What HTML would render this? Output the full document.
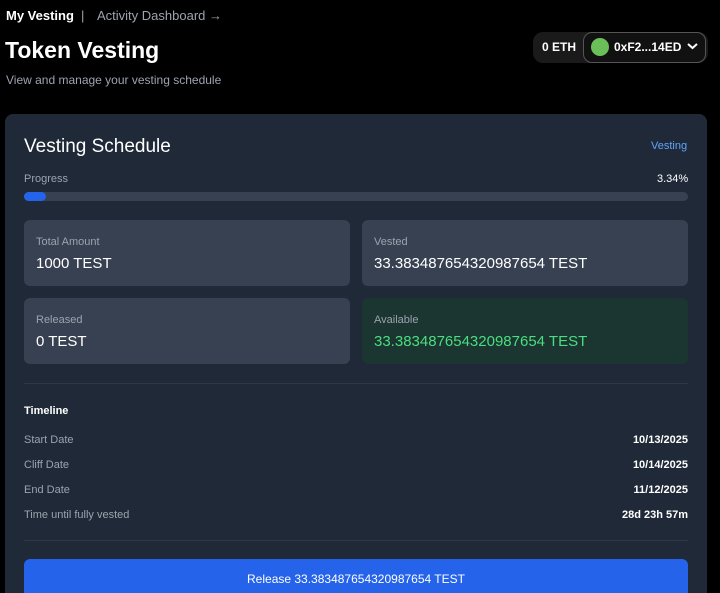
<!DOCTYPE html>
<html><head><style>
*{margin:0;padding:0;box-sizing:border-box}
html,body{width:720px;height:593px;overflow:hidden}
body{background:#000;font-family:"Liberation Sans",sans-serif;color:#fff;position:relative}
.a{position:absolute}
.card{left:5px;top:114px;width:702px;height:479px;background:#1f2937;border-radius:8px 8px 0 0}
.box{position:absolute;width:326px;height:66px;background:#374151;border-radius:6px}
.box .l{position:absolute;left:12px;top:16px;font-size:11px;color:#9ca3af}
.box .v{position:absolute;left:12px;top:35px;font-size:15px;color:#fff}
.row{position:absolute;left:24px;width:664px;font-size:11px;color:#9ca3af;display:flex;justify-content:space-between}
.row b{color:#fff;font-size:11px}
</style></head><body>
<div class="a" style="left:6px;top:8px;font-size:13px;font-weight:bold">My Vesting</div>
<div class="a" style="left:81px;top:8px;font-size:13px;color:#9ca3af">|</div>
<div class="a" style="left:97px;top:8px;font-size:13px;color:#9ca3af">Activity Dashboard →</div>
<div class="a" style="left:5px;top:37px;font-size:23px;font-weight:bold">Token Vesting</div>
<div class="a" style="left:6px;top:73px;font-size:12px;color:#9ca3af">View and manage your vesting schedule</div>
<div class="a" style="left:533px;top:32px;width:175px;height:31px;background:#1a1a1a;border-radius:10px"></div>
<div class="a" style="left:542px;top:40px;font-size:12px;font-weight:bold">0 ETH</div>
<div class="a" style="left:583px;top:32px;width:123px;height:31px;border:1.5px solid #555;border-radius:9px;background:#111"></div>
<div class="a" style="left:591px;top:38px;width:18px;height:18px;border-radius:50%;background:#6bbf59"></div>
<div class="a" style="left:614px;top:40px;font-size:12px;font-weight:bold">0xF2...14ED</div>
<svg class="a" style="left:687px;top:42px" width="11" height="8"><path d="M1 2l4.5 4 4.5-4" stroke="#fff" stroke-width="2" fill="none"/></svg>
<div class="a card"></div>
<div class="a" style="left:24px;top:136px;font-size:19px">Vesting Schedule</div>
<div class="a" style="left:651px;top:140px;font-size:11px;color:#60a5fa">Vesting</div>
<div class="a" style="left:24px;top:173px;font-size:11px;color:#9ca3af">Progress</div>
<div class="a" style="left:657px;top:173px;font-size:11px">3.34%</div>
<div class="a" style="left:24px;top:192px;width:664px;height:9px;background:#374151;border-radius:5px"></div>
<div class="a" style="left:24px;top:192px;width:22px;height:9px;background:#2563eb;border-radius:5px"></div>
<div class="box" style="left:24px;top:220px"><div class="l">Total Amount</div><div class="v">1000 TEST</div></div>
<div class="box" style="left:362px;top:220px"><div class="l">Vested</div><div class="v">33.383487654320987654 TEST</div></div>
<div class="box" style="left:24px;top:298px"><div class="l">Released</div><div class="v">0 TEST</div></div>
<div class="box" style="left:362px;top:298px;background:#1b3530"><div class="l">Available</div><div class="v" style="color:#4ade80">33.383487654320987654 TEST</div></div>
<div class="a" style="left:24px;top:383px;width:664px;height:1px;background:#2d3748"></div>
<div class="a" style="left:24px;top:405px;font-size:11px;font-weight:bold">Timeline</div>
<div class="row" style="top:434px"><span>Start Date</span><b>10/13/2025</b></div>
<div class="row" style="top:459px"><span>Cliff Date</span><b>10/14/2025</b></div>
<div class="row" style="top:484px"><span>End Date</span><b>11/12/2025</b></div>
<div class="row" style="top:509px"><span>Time until fully vested</span><b>28d 23h 57m</b></div>
<div class="a" style="left:24px;top:540px;width:664px;height:1px;background:#2d3748"></div>
<div class="a" style="left:24px;top:559px;width:664px;height:34px;background:#2563eb;border-radius:6px 6px 0 0;text-align:center;font-size:12px;padding-top:13px">Release 33.383487654320987654 TEST</div>
</body></html>
